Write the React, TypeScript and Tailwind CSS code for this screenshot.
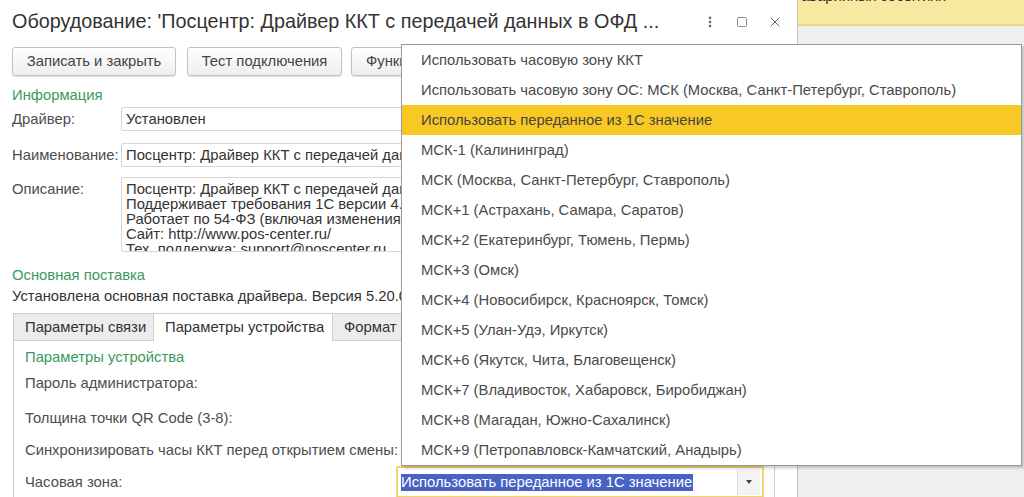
import { MoreVertical, Square, X } from 'lucide-react';

const zones = [
  'Использовать часовую зону ККТ',
  'Использовать часовую зону ОС: МСК (Москва, Санкт-Петербург, Ставрополь)',
  'Использовать переданное из 1С значение',
  'МСК-1 (Калининград)',
  'МСК (Москва, Санкт-Петербург, Ставрополь)',
  'МСК+1 (Астрахань, Самара, Саратов)',
  'МСК+2 (Екатеринбург, Тюмень, Пермь)',
  'МСК+3 (Омск)',
  'МСК+4 (Новосибирск, Красноярск, Томск)',
  'МСК+5 (Улан-Удэ, Иркутск)',
  'МСК+6 (Якутск, Чита, Благовещенск)',
  'МСК+7 (Владивосток, Хабаровск, Биробиджан)',
  'МСК+8 (Магадан, Южно-Сахалинск)',
  'МСК+9 (Петропавловск-Камчатский, Анадырь)',
];

const selected = 2;

function Field({ label, value }: { label: string; value: string }) {
  return (
    <div className="flex items-center h-[24px]">
      <div className="w-[109px] shrink-0 text-[#4d4d4d]">{label}</div>
      <div className="w-[650px] h-[24px] border border-[#d6d6d6] rounded-[2px] px-[4px] flex items-center whitespace-nowrap overflow-hidden text-[#333]">
        {value}
      </div>
    </div>
  );
}

export default function App() {
  return (
    <div className="relative w-[1024px] h-[497px] overflow-hidden flex bg-[#f0f0f0] text-[14.8px] font-['Liberation_Sans',Arial,sans-serif]">
      {/* Main window */}
      <div className="w-[798px] h-full shrink-0 bg-white border-r border-[#c4c4c4] flex flex-col overflow-hidden">
        {/* Title */}
        <div className="h-[44px] flex items-center pl-[12px] pr-[14px] shrink-0">
          <div className="text-[19.8px] text-[#333] whitespace-nowrap flex-1">
            Оборудование: 'Посцентр: Драйвер ККТ с передачей данных в ОФД ...
          </div>
          <div className="flex items-center gap-[19px] text-[#666]">
            <MoreVertical className="w-[14px] h-[14px]" strokeWidth={2.5} />
            <Square className="w-[12px] h-[12px]" strokeWidth={1.5} />
            <X className="w-[16px] h-[16px]" strokeWidth={1.5} />
          </div>
        </div>

        {/* Command bar */}
        <div className="flex mt-[3px] pl-[12px] h-[29px] shrink-0">
          <button className="w-[164px] h-[29px] border border-[#c2c2c2] rounded-[3px] bg-gradient-to-b from-white to-[#eeeeee] shadow-[0_1px_1px_rgba(0,0,0,0.12)] text-[#444]">
            Записать и закрыть
          </button>
          <button className="ml-[11px] w-[155px] h-[29px] border border-[#c2c2c2] rounded-[3px] bg-gradient-to-b from-white to-[#eeeeee] shadow-[0_1px_1px_rgba(0,0,0,0.12)] text-[#444]">
            Тест подключения
          </button>
          <button className="ml-[9px] w-[150px] h-[29px] border border-[#c2c2c2] rounded-[3px] bg-gradient-to-b from-white to-[#eeeeee] shadow-[0_1px_1px_rgba(0,0,0,0.12)] text-[#444] text-left pl-[14px]">
            Функции
          </button>
        </div>

        {/* Информация */}
        <div className="pl-[12px] flex flex-col">
          <div className="mt-[11px] leading-[16px] text-[#3a9a5e]">Информация</div>
          <div className="mt-[4px] flex flex-col gap-[12px]">
            <Field label="Драйвер:" value="Установлен" />
            <Field label="Наименование:" value="Посцентр: Драйвер ККТ с передачей данных в ОФД" />
          </div>
          <div className="mt-[10px] flex">
            <div className="w-[109px] shrink-0 text-[#4d4d4d] pt-[1px]">Описание:</div>
            <div className="w-[650px] h-[75px] border border-[#d6d6d6] rounded-[2px] px-[4px] pt-[4px] overflow-hidden whitespace-nowrap text-[#333] leading-[15px]">
              <div>Посцентр: Драйвер ККТ с передачей данных в ОФД</div>
              <div>Поддерживает требования 1С версии 4.0</div>
              <div>Работает по 54-ФЗ (включая изменения, вступающие в силу)</div>
              <div>Сайт: http://www.pos-center.ru/</div>
              <div className="h-[9px] overflow-hidden">Тех. поддержка: support@poscenter.ru</div>
            </div>
          </div>
          <div className="mt-[15px] leading-[16px] text-[#3a9a5e]">Основная поставка</div>
          <div className="mt-[5px] leading-[16px] text-[#333] whitespace-nowrap">
            Установлена основная поставка драйвера. Версия 5.20.0.0
          </div>
        </div>

        {/* Tabs */}
        <div className="mt-[9px] ml-[13px] mr-[22px] flex h-[28px] shrink-0">
          <div className="w-[141px] h-[28px] border border-[#cfcfcf] bg-[#ececec] flex items-center pl-[11px] text-[#333] whitespace-nowrap">
            Параметры связи
          </div>
          <div className="w-[179px] h-[28px] border-t border-r border-[#cfcfcf] bg-white flex items-center pl-[11px] text-[#333] whitespace-nowrap">
            Параметры устройства
          </div>
          <div className="w-[120px] h-[28px] border-t border-r border-b border-[#cfcfcf] bg-[#ececec] flex items-center pl-[11px] text-[#333] whitespace-nowrap">
            Формат
          </div>
          <div className="flex-1 border-b border-[#cfcfcf]" />
        </div>
        <div className="ml-[13px] mr-[22px] flex-1 border-l border-r border-[#cfcfcf] pl-[11px] flex flex-col">
          <div className="mt-[8px] leading-[16px] text-[#3a9a5e]">Параметры устройства</div>
          <div className="h-[36px] flex items-center text-[#4d4d4d]">Пароль администратора:</div>
          <div className="h-[34px] flex items-center text-[#4d4d4d]">Толщина точки QR Code (3-8):</div>
          <div className="h-[31px] flex items-center text-[#4d4d4d] whitespace-nowrap">Синхронизировать часы ККТ перед открытием смены:</div>
          <div className="h-[32px] flex items-center">
            <div className="w-[371px] shrink-0 text-[#4d4d4d]">Часовая зона:</div>
            <div className="w-[368px] h-[32px] border-2 border-[#f2d36b] rounded-[2px] flex items-center bg-white">
              <div className="flex-1 pl-[3px] whitespace-nowrap">
                <span className="bg-[#4862c6] text-white leading-[17px] inline-block pr-[1px]">
                  Использовать переданное из 1С значение
                </span>
              </div>
              <div className="w-[23px] h-[26px] mr-[2px] border-l border-[#dcdcdc] bg-[#f3f3f3] flex items-center justify-center">
                <div className="w-0 h-0 border-l-[3px] border-r-[3px] border-t-[4px] border-l-transparent border-r-transparent border-t-[#444]" />
              </div>
            </div>
          </div>
        </div>
      </div>

      {/* Background area */}
      <div className="flex-1 flex flex-col">
        <div className="h-[26px] bg-[#f8e9a1] border-b-2 border-[#ebd88c] overflow-hidden pl-[3px]">
          <div className="-mt-[12px] leading-[16px] text-[#333] whitespace-nowrap">аварийных событиях</div>
        </div>
      </div>

      {/* Dropdown list */}
      <div className="absolute left-[401px] top-[44px] w-[621px] border border-[#9a9a9a] bg-white shadow-[2px_2px_3px_rgba(0,0,0,0.22)]">
        {zones.map((z, i) => (
          <div
            key={z}
            className={
              i === selected
                ? 'h-[30px] flex items-center pl-[19px] bg-[#f8c925] text-[#444] whitespace-nowrap'
                : 'h-[30px] flex items-center pl-[19px] text-[#4a4a4a] whitespace-nowrap'
            }
          >
            {z}
          </div>
        ))}
      </div>
    </div>
  );
}
